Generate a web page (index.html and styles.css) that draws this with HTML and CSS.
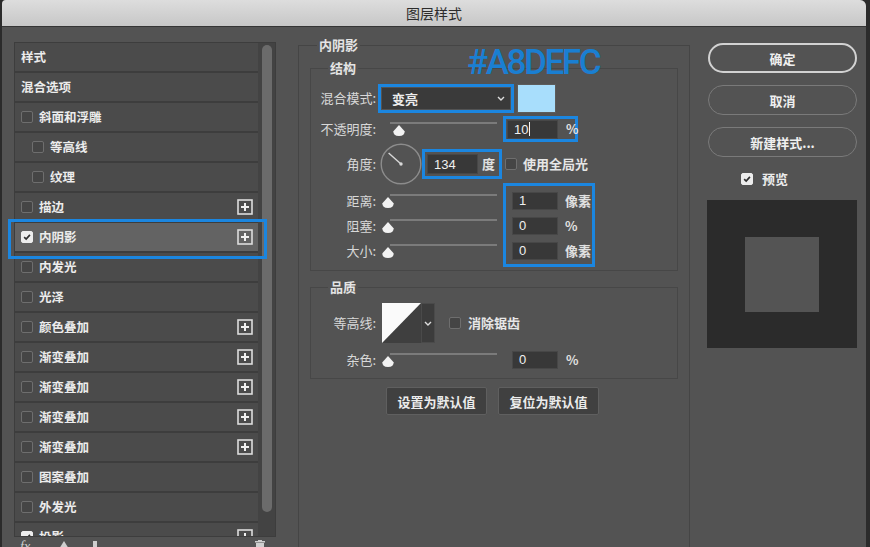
FILE: index.html
```html
<!DOCTYPE html>
<html lang="zh-CN">
<head>
<meta charset="utf-8">
<title>图层样式</title>
<link rel="stylesheet" href="styles.css">
</head>
<body>
<div class="window">
  <div class="titlebar">图层样式</div>
  <div class="main">
    <aside class="left">
      <div class="list-wrap">
        <ul class="list">
          <li class="row">样式</li>
          <li class="row">混合选项</li>
          <li class="row"><span class="cb"></span>斜面和浮雕</li>
          <li class="row sub"><span class="cb"></span>等高线</li>
          <li class="row sub"><span class="cb"></span>纹理</li>
          <li class="row"><span class="cb"></span>描边<svg class="plus" viewBox="0 0 16 16"><rect x="1" y="1" width="14" height="14" fill="none" stroke="#dcdcdc" stroke-width="1.6"/><path d="M8 4v8M4 8h8" stroke="#f0f0f0" stroke-width="2"/></svg></li>
          <li class="row active"><span class="cb on"><svg viewBox="0 0 12 12"><path d="M2.6 6.2 5 8.5 9.5 3.5" fill="none" stroke="#2e2e2e" stroke-width="2"/></svg></span>内阴影<svg class="plus" viewBox="0 0 16 16"><rect x="1" y="1" width="14" height="14" fill="none" stroke="#dcdcdc" stroke-width="1.6"/><path d="M8 4v8M4 8h8" stroke="#f0f0f0" stroke-width="2"/></svg></li>
          <li class="row"><span class="cb"></span>内发光</li>
          <li class="row"><span class="cb"></span>光泽</li>
          <li class="row"><span class="cb"></span>颜色叠加<svg class="plus" viewBox="0 0 16 16"><rect x="1" y="1" width="14" height="14" fill="none" stroke="#dcdcdc" stroke-width="1.6"/><path d="M8 4v8M4 8h8" stroke="#f0f0f0" stroke-width="2"/></svg></li>
          <li class="row"><span class="cb"></span>渐变叠加<svg class="plus" viewBox="0 0 16 16"><rect x="1" y="1" width="14" height="14" fill="none" stroke="#dcdcdc" stroke-width="1.6"/><path d="M8 4v8M4 8h8" stroke="#f0f0f0" stroke-width="2"/></svg></li>
          <li class="row"><span class="cb"></span>渐变叠加<svg class="plus" viewBox="0 0 16 16"><rect x="1" y="1" width="14" height="14" fill="none" stroke="#dcdcdc" stroke-width="1.6"/><path d="M8 4v8M4 8h8" stroke="#f0f0f0" stroke-width="2"/></svg></li>
          <li class="row"><span class="cb"></span>渐变叠加<svg class="plus" viewBox="0 0 16 16"><rect x="1" y="1" width="14" height="14" fill="none" stroke="#dcdcdc" stroke-width="1.6"/><path d="M8 4v8M4 8h8" stroke="#f0f0f0" stroke-width="2"/></svg></li>
          <li class="row"><span class="cb"></span>渐变叠加<svg class="plus" viewBox="0 0 16 16"><rect x="1" y="1" width="14" height="14" fill="none" stroke="#dcdcdc" stroke-width="1.6"/><path d="M8 4v8M4 8h8" stroke="#f0f0f0" stroke-width="2"/></svg></li>
          <li class="row"><span class="cb"></span>图案叠加</li>
          <li class="row"><span class="cb"></span>外发光</li>
          <li class="row"><span class="cb on"><svg viewBox="0 0 12 12"><path d="M2.6 6.2 5 8.5 9.5 3.5" fill="none" stroke="#2e2e2e" stroke-width="2"/></svg></span>投影<svg class="plus" viewBox="0 0 16 16"><rect x="1" y="1" width="14" height="14" fill="none" stroke="#dcdcdc" stroke-width="1.6"/><path d="M8 4v8M4 8h8" stroke="#f0f0f0" stroke-width="2"/></svg></li>
        </ul>
        <div class="scroll"><div class="thumb"></div></div>
      </div>
      <div class="foot">
        <span class="fx">fx</span>
        <svg class="ficon up" viewBox="0 0 12 12"><path d="M6 1 11 9H1Z" fill="#cfcfcf"/></svg>
        <svg class="ficon bar" viewBox="0 0 6 12"><rect x="1" y="1" width="4" height="10" fill="#cfcfcf"/></svg>
        <svg class="ficon trash" viewBox="0 0 12 12"><path d="M4 2V1h4v1h3v1.5H1V2Z M2 4h8v8H2Z" fill="#cfcfcf"/></svg>
      </div>
      <div class="mark"></div>
    </aside>

    <main class="mid">
      <fieldset class="outer">
        <legend>内阴影</legend>
        <fieldset class="box">
          <legend>结构</legend>
          <div class="frow r-mode">
            <span class="lbl">混合模式:</span>
            <div class="hl hl-mode">
              <div class="select"><span>变亮</span><svg class="chev" viewBox="0 0 8 5"><path d="M1 1 4 4 7 1" fill="none" stroke="#dedede" stroke-width="1.4"/></svg></div>
            </div>
            <div class="swatch"></div>
          </div>
          <div class="frow r-op">
            <span class="lbl">不透明度:</span>
            <div class="slider"><div class="track"></div><svg class="handle" style="margin-left:10.7px" viewBox="0 0 12 11"><path d="M6 0 11.6 6.2Q12 11 6 11Q0 11 0.4 6.2Z" fill="#f2f2f2"/></svg></div>
            <div class="hl hl-op">
              <span class="field w51">10<i class="caret"></i></span><span class="unit">%</span>
            </div>
          </div>
          <div class="frow r-angle">
            <span class="lbl">角度:</span>
            <svg class="dial" viewBox="0 0 42 42"><circle cx="21" cy="21" r="19.8" fill="none" stroke="#8c8c8c" stroke-width="1.4"/><path d="M21 21 8.6 10" stroke="#d8d8d8" stroke-width="1.4"/><circle cx="21" cy="21" r="1.7" fill="#d8d8d8"/></svg>
            <div class="hl hl-angle">
              <span class="field w51">134</span><span class="unit">度</span>
            </div>
            <span class="cb ml3"></span><span class="opt">使用全局光</span>
          </div>
          <div class="multi">
            <div class="sl-col">
              <div class="srow">
                <span class="lbl">距离:</span>
                <div class="slider"><div class="track"></div><svg class="handle" style="margin-left:0px" viewBox="0 0 12 11"><path d="M6 0 11.6 6.2Q12 11 6 11Q0 11 0.4 6.2Z" fill="#f2f2f2"/></svg></div>
              </div>
              <div class="srow">
                <span class="lbl">阻塞:</span>
                <div class="slider"><div class="track"></div><svg class="handle" style="margin-left:0px" viewBox="0 0 12 11"><path d="M6 0 11.6 6.2Q12 11 6 11Q0 11 0.4 6.2Z" fill="#f2f2f2"/></svg></div>
              </div>
              <div class="srow">
                <span class="lbl">大小:</span>
                <div class="slider"><div class="track"></div><svg class="handle" style="margin-left:0px" viewBox="0 0 12 11"><path d="M6 0 11.6 6.2Q12 11 6 11Q0 11 0.4 6.2Z" fill="#f2f2f2"/></svg></div>
              </div>
            </div>
            <div class="hl hl-multi">
              <div class="irow"><span class="field w46">1</span><span class="unit u7">像素</span></div>
              <div class="irow"><span class="field w46">0</span><span class="unit u7">%</span></div>
              <div class="irow"><span class="field w46">0</span><span class="unit u7">像素</span></div>
            </div>
          </div>
        </fieldset>

        <fieldset class="box quality">
          <legend>品质</legend>
          <div class="frow r-contour">
            <span class="lbl">等高线:</span>
            <svg class="contour" viewBox="0 0 39 40"><rect width="39" height="40" fill="#3f3f3f"/><path d="M0 0H39L0 40Z" fill="#fafafa"/></svg>
            <div class="cdrop"><svg class="chev" viewBox="0 0 8 5"><path d="M1 1 4 4 7 1" fill="none" stroke="#dedede" stroke-width="1.4"/></svg></div>
            <span class="cb ml14"></span><span class="opt">消除锯齿</span>
          </div>
          <div class="frow r-noise">
            <span class="lbl">杂色:</span>
            <div class="slider"><div class="track"></div><svg class="handle" style="margin-left:0px" viewBox="0 0 12 11"><path d="M6 0 11.6 6.2Q12 11 6 11Q0 11 0.4 6.2Z" fill="#f2f2f2"/></svg></div>
            <span class="field w46 ml15">0</span><span class="unit">%</span>
          </div>
        </fieldset>

        <div class="btns">
          <button class="btn">设置为默认值</button>
          <button class="btn">复位为默认值</button>
        </div>
      </fieldset>
    </main>

    <aside class="right">
      <button class="pill primary">确定</button>
      <button class="pill">取消</button>
      <button class="pill">新建样式...</button>
      <div class="prev-row"><span class="cb on"><svg viewBox="0 0 12 12"><path d="M2.6 6.2 5 8.5 9.5 3.5" fill="none" stroke="#2e2e2e" stroke-width="2"/></svg></span><span class="prev-lbl">预览</span></div>
      <div class="preview"><div class="preview-inner"></div></div>
    </aside>
  </div>
  <div class="hex">#A8DEFC</div>
</div>
</body>
</html>
```

FILE: styles.css
```css
* { box-sizing: border-box; }
html, body { margin: 0; padding: 0; }
body {
  width: 870px;
  height: 547px;
  overflow: hidden;
  background: #2b2b2b;
  font-family: "Noto Sans CJK SC", sans-serif;
  color: #e6e6e6;
}
.window {
  position: relative;
  margin-left: 2px;
  width: 864px;
  height: 547px;
  background: #535353;
  overflow: hidden;
  border-radius: 4px 6px 0 0;
}
.titlebar {
  height: 27px;
  background: linear-gradient(#dddddd, #c7c7c7);
  border-bottom: 1px solid #353535;
  text-align: center;
  font-size: 14px;
  line-height: 26px;
  color: #2c2c2c;
}
.main { display: flex; height: 520px; }

/* left list */
.left { position: relative; width: 274px; flex: none; padding: 15px 0 0 12px; }
.list-wrap {
  display: flex;
  width: 262px;
  height: 495px;
  border: 1px solid #3d3d3d;
  background: #3d3d3d;
  overflow: hidden;
}
.list { list-style: none; margin: 0; padding: 0; width: 243px; flex: none; }
.row {
  display: flex;
  align-items: center;
  height: 28px;
  margin-bottom: 2px;
  padding-left: 6px;
  background: #4b4b4b;
  font-size: 12.5px;
  font-weight: 700;
  line-height: 16px;
  color: #ececec;
}
.row.sub { padding-left: 17px; }
.row.active { background: #636363; }
.row .cb { margin-right: 6px; }
.cb {
  display: inline-flex;
  flex: none;
  width: 12px;
  height: 12px;
  border: 1px solid #6e6e6e;
  border-radius: 2px;
  background: #454545;
}
.cb.on { background: #ededed; border-color: #ededed; }
.cb svg { width: 10px; height: 10px; }
.plus { width: 16px; height: 16px; margin-left: auto; margin-right: 5px; flex: none; }
.scroll { width: 17px; flex: none; background: #434343; padding: 2px 0 0 4px; }
.thumb { width: 10px; height: 467px; border-radius: 5px; background: #6b6b6b; }
.foot { display: flex; align-items: flex-start; height: 14px; margin-top: 3px; padding-left: 6px; }
.fx { font-family: "Liberation Serif", serif; font-style: italic; font-size: 14px; line-height: 14px; color: #cfcfcf; }
.ficon { width: 12px; height: 12px; flex: none; }
.ficon.up { margin-left: 28px; }
.ficon.bar { width: 6px; margin-left: 22px; }
.ficon.trash { margin-left: auto; margin-right: 10px; margin-top: -1px; }
.mark {
  position: absolute;
  left: 6px;
  top: 192px;
  width: 259px;
  height: 40px;
  border: 3px solid #1b86e0;
}

/* middle */
.mid { width: 414px; flex: none; padding-left: 22px; }
fieldset { margin: 0; min-width: 0; }
legend {
  padding: 0 2px;
  font-size: 13px;
  line-height: 16px;
  font-weight: 700;
  color: #e4e4e4;
}
.outer {
  width: 392px;
  height: 600px;
  margin-top: 10px;
  padding: 0 11px;
  border: 1px solid #454545;
}
.outer > legend { margin-left: 7px; }
.box {
  width: 368px;
  margin-top: 7px;
  padding: 0 0 3px 0;
  border: 1px solid #474747;
}
.box > legend { margin-left: 17px; }
.box.quality { margin-top: 8px; padding-bottom: 6px; }

.frow { display: flex; align-items: center; }
.lbl {
  width: 65px;
  flex: none;
  text-align: right;
  font-size: 13px;
  line-height: 16px;
  color: #d8d8d8;
}
.r-mode { margin-top: 7px; height: 30px; }
.hl { border: 3px solid #1b86e0; flex: none; }
.hl-mode { margin-left: 2px; width: 136px; height: 29px; padding: 1px; }
.select {
  display: flex;
  align-items: center;
  height: 100%;
  padding: 0 5px 0 10px;
  background: #3a3a3a;
  font-size: 13px;
  font-weight: 700;
  color: #ececec;
}
.chev { width: 8px; height: 5px; flex: none; }
.select .chev { margin-left: auto; }
.swatch { margin-left: 3px; width: 39px; height: 29px; background: #a8defc; border: 1px solid #5c5c5c; flex: none; }

.slider { display: flex; flex-direction: column; width: 115px; margin-left: 6px; flex: none; }
.track { width: 107px; height: 2px; margin-left: 8px; background: #7b7b7b; }
.handle { width: 12px; height: 11px; margin-top: 1px; }

.field {
  display: flex;
  align-items: center;
  flex: none;
  padding-left: 6px;
  background: #383838;
  border: 1px solid #474747;
  font-family: "Liberation Sans", "Noto Sans CJK SC", sans-serif;
  font-size: 13px;
  color: #f0f0f0;
}
.w51 { width: 51px; height: 20px; }
.w46 { width: 46px; height: 18px; }
.caret { display: inline-block; width: 1px; height: 14px; background: #f4f4f4; margin-left: 1px; }
.unit { font-size: 13px; line-height: 16px; color: #e0e0e0; margin-left: 8px; font-weight: 700; }
.unit.u7 { margin-left: 7px; }

.r-op { margin-top: 3px; height: 26px; }
.hl-op { display: flex; align-items: center; margin-left: 6px; width: 75px; height: 26px; padding-left: 1px; }
.hl-op .field { height: 19px; }

.r-angle { margin-top: 1px; height: 42px; }
.dial { width: 42px; height: 42px; margin-left: 4px; flex: none; }
.hl-angle { display: flex; align-items: center; width: 80px; height: 30px; padding-left: 2px; }
.hl-angle .unit { margin-left: 4px; }
.ml3 { margin-left: 3px; }
.ml14 { margin-left: 14px; }
.ml15 { margin-left: 15px; }
.opt { margin-left: 6px; font-size: 13px; line-height: 16px; font-weight: 700; color: #e6e6e6; }

.multi { display: flex; margin-top: -2px; }
.sl-col { padding-top: 5px; }
.srow { display: flex; align-items: center; height: 25px; }
.hl-multi { margin-left: 6px; width: 92px; height: 84px; padding: 2px 0 1px 6px; }
.irow { display: flex; align-items: center; height: 25px; }

.r-contour { margin-top: 8px; height: 40px; }
.contour { width: 39px; height: 40px; margin-left: 6px; flex: none; }
.cdrop { display: flex; align-items: center; justify-content: center; width: 14px; height: 40px; background: #3c3c3c; border: 1px solid #4a4a4a; flex: none; }
.r-contour .opt { margin-left: 7px; }
.r-noise { margin-top: 4px; height: 25px; }

.btns { display: flex; gap: 11px; margin: 8px 0 0 76px; }
.btn {
  width: 101px;
  height: 28px;
  padding: 0;
  background: #404040;
  border: 1px solid #5f5f5f;
  border-radius: 2px;
  font-family: "Noto Sans CJK SC", sans-serif;
  font-size: 13px;
  font-weight: 700;
  color: #ececec;
}

/* right */
.right { display: flex; flex-direction: column; width: 176px; flex: none; padding: 16px 0 0 18px; }
.pill {
  width: 149px;
  height: 30px;
  margin-bottom: 12px;
  padding: 0;
  background: #535353;
  border: 1.5px solid #7a7a7a;
  border-radius: 15px;
  font-family: "Noto Sans CJK SC", sans-serif;
  font-size: 13px;
  font-weight: 700;
  color: #efefef;
}
.pill.primary { border: 2px solid #d2d2d2; }
.prev-row { display: flex; align-items: center; height: 12px; margin: 4px 0 0 33px; }
.prev-lbl { margin-left: 9px; font-size: 13px; line-height: 16px; font-weight: 700; color: #ececec; }
.preview {
  display: flex;
  align-items: center;
  justify-content: center;
  width: 150px;
  height: 148px;
  margin: 15px 0 0 -1px;
  background: #2b2b2b;
}
.preview-inner { width: 74px; height: 75px; background: #545454; }

.hex {
  position: absolute;
  left: 465px;
  top: 45px;
  font-family: Roboto, "Liberation Sans", sans-serif;
  font-weight: 500;
  font-size: 35px;
  line-height: 1;
  letter-spacing: -2.4px;
  color: #1a7fd2;
}
```
